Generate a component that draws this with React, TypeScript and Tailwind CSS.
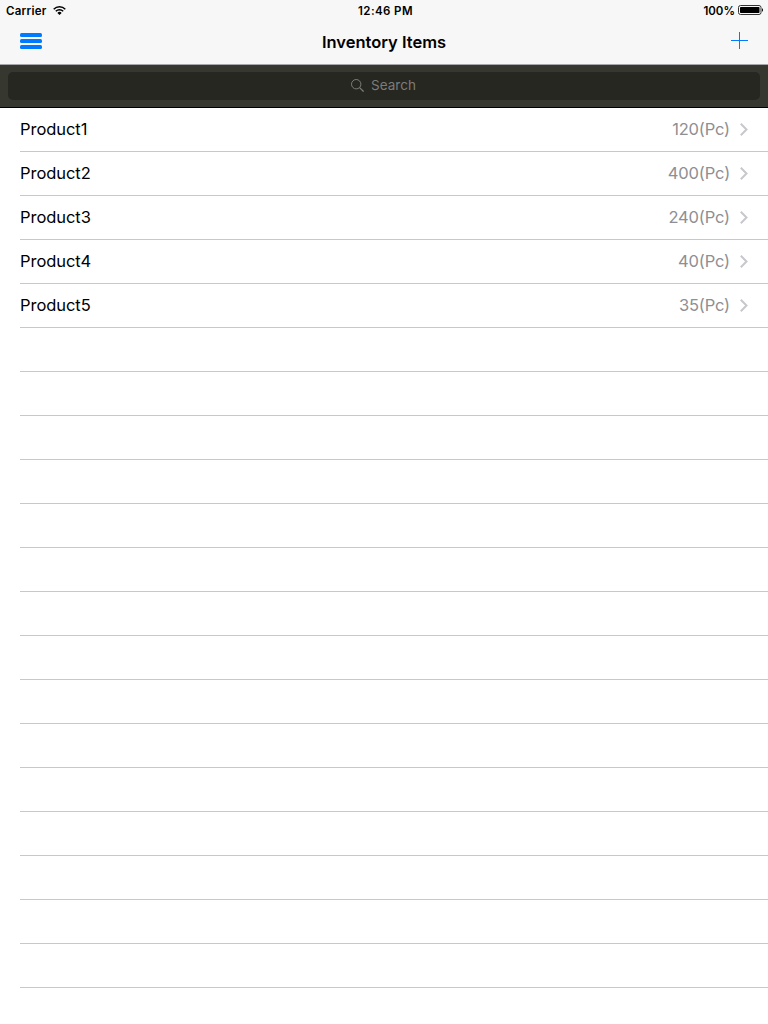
import React from "react";

interface Item {
  name: string;
  quantity: number;
}

interface RowProps {
  item?: Item;
}

const items: Item[] = [
  { name: "Product1", quantity: 120 },
  { name: "Product2", quantity: 400 },
  { name: "Product3", quantity: 240 },
  { name: "Product4", quantity: 40 },
  { name: "Product5", quantity: 35 },
];

// the list is filled with empty rows down to the bottom of the screen
const ROWS = 20;

const StatusBar: React.FC = () => {
  return (
    <div className="grid h-5 grid-cols-3 items-center pl-1.5 pr-[5px] text-[11.5px] font-semibold leading-5">
      <div className="flex items-center">
        <span className="w-[41px] pt-px tracking-[0.25px]">Carrier</span>
        <svg className="ml-1.5 h-[9px] w-[13px]" viewBox="0 0 13 9" fill="none">
          <path d="M0.7 3.2a8.3 8.3 0 0 1 11.6 0" stroke="#000" strokeWidth="1.5" />
          <path d="M2.8 5.3a5.3 5.3 0 0 1 7.4 0" stroke="#000" strokeWidth="1.5" />
          <path d="M6.5 9 4.4 6.9a3 3 0 0 1 4.2 0z" fill="#000" />
        </svg>
      </div>
      <div className="pl-0.5 pt-px text-center tracking-[0.4px]">12:46 PM</div>
      <div className="flex items-center justify-end">
        <span className="pt-px">100%</span>
        <svg className="mb-0.5 ml-[3px] h-[10px] w-[25px]" viewBox="0 0 25 10" fill="none">
          <rect x="0.5" y="0.5" width="22.5" height="9" rx="2" stroke="#333" />
          <rect x="2" y="2" width="19.5" height="6" rx="0.7" fill="#000" />
          <path d="M24 3.2c.7.3 1 1 1 1.8s-.3 1.5-1 1.8z" fill="#000" />
        </svg>
      </div>
    </div>
  );
};

const NavBar: React.FC = () => {
  return (
    <div className="grid h-11 grid-cols-3 items-center px-5">
      <button className="mb-0.5 h-4 w-[22px]">
        <svg className="h-4 w-[22px]" viewBox="0 0 22 16" fill="#007aff">
          <rect width="22" height="4" rx="1.5" />
          <rect y="6" width="22" height="4" rx="1.5" />
          <rect y="12" width="22" height="4" rx="1.5" />
        </svg>
      </button>
      <h1 className="pb-px text-center text-[16.5px] font-semibold leading-6">
        Inventory Items
      </h1>
      <button className="mb-1 justify-self-end">
        <svg className="h-[17px] w-[17px]" viewBox="0 0 17 17" stroke="#007aff">
          <path d="M0 8.5h17M8.5 0v17" />
        </svg>
      </button>
    </div>
  );
};

const SearchBar: React.FC = () => {
  return (
    <div className="h-[43px] border-b border-black bg-[#36372f] px-2 pt-[7px]">
      <div className="flex h-7 items-center justify-center rounded-[5px] bg-[#262721] pb-0.5 pr-px text-[13.5px] text-[#7c7c79]">
        <svg className="mr-[7px] h-[13px] w-[13px]" viewBox="0 0 13 13" fill="none" stroke="#7c7c79">
          <circle cx="5.2" cy="5.2" r="4.7" />
          <path d="M8.6 8.6 12.6 12.6" strokeWidth="1.3" />
        </svg>
        <span>Search</span>
      </div>
    </div>
  );
};

const Row: React.FC<RowProps> = ({ item }) => {
  return (
    <li className="ml-5 flex h-11 items-center justify-between border-b border-[#c8c7cc] pr-5 text-[16.5px] leading-6">
      {item ? (
        <>
          <span className="pb-0.5 tracking-[-0.05px]">{item.name}</span>
          <div className="flex items-center text-[#8e8e93]">
            <span className="pb-0.5 tracking-[-0.15px]">{`${item.quantity}(Pc)`}</span>
            <svg className="ml-2.5 h-[13px] w-2" viewBox="0 0 8 13" fill="none">
              <path d="M0.8 0.8 6.5 6.5 0.8 12.2" stroke="#c7c7cc" strokeWidth="2" />
            </svg>
          </div>
        </>
      ) : (
        <></>
      )}
    </li>
  );
};

const App: React.FC = () => {
  return (
    <div className="h-screen overflow-hidden bg-white font-['Inter',sans-serif] text-black">
      <header className="border-b border-[#a7a7aa] bg-[#f7f7f7]">
        <StatusBar />
        <NavBar />
      </header>
      <SearchBar />
      <ul>
        {Array.from({ length: ROWS }, (_, i) => (
          <Row key={i} item={items[i]} />
        ))}
      </ul>
    </div>
  );
};

export default App;
